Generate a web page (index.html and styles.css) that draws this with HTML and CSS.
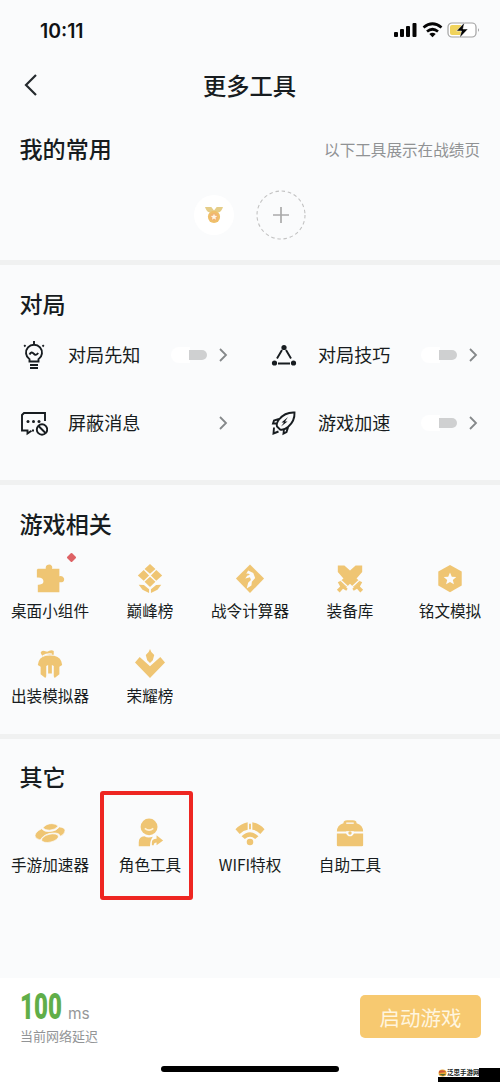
FILE: index.html
```html
<!DOCTYPE html>
<html lang="zh-CN">
<head>
<meta charset="utf-8">
<title>更多工具</title>
<link rel="stylesheet" href="styles.css">
</head>
<body>
<main class="screen">
  <header class="status">
    <span class="clock">10:11</span>
    <svg class="status-icons" width="86" height="18" viewBox="0 0 86 18">
      <g fill="#050505"><rect x="0" y="10" width="4" height="5" rx="1"/><rect x="6" y="7" width="4" height="8" rx="1"/><rect x="12" y="4" width="4" height="11" rx="1"/><rect x="18.500" y="1" width="4" height="14" rx="1"/></g>
      <path d="M29.500 5.500Q38.500-2 47.500 5.500M33 9.500Q38.500 5 44 9.500" fill="none" stroke="#050505" stroke-width="2.700"/>
      <path d="M35.300 12Q38.500 9.500 41.700 12L38.500 15.200Z" fill="#050505"/>
      <rect x="54" y="1" width="28" height="14" rx="4" fill="#fff" stroke="#a2a2a2" stroke-width="1.200"/>
      <path d="M58 3h9v10h-9q-2 0-2-2V5q0-2 2-2z" fill="#f0d35c"/>
      <path d="M70.500.5 62.500 9h5L65.500 16 74 7h-5z" fill="#050505" stroke="#fff" stroke-width=".5"/>
      <path d="M84 6q1.600 2 0 4z" fill="#777"/>
    </svg>
  </header>
  <nav class="nav">
    <svg class="back" width="14" height="22" viewBox="0 0 14 22"><path d="M12 1 2 11l10 10" fill="none" stroke="#252a2e" stroke-width="2.200"/></svg>
    <h1 class="title">更多工具</h1>
  </nav>

  <section class="favorites">
    <div class="section-head"><h2 class="heading">我的常用</h2><span class="hint">以下工具展示在战绩页</span></div>
    <div class="slots">
      <div class="slot medal">
        <svg width="20" height="18" viewBox="0 0 22 20"><path d="M1 1h7l3 4 3-4h7q-2 6-5 6H6Q3 7 1 1z" fill="#e5cd88"/><circle cx="11" cy="12" r="6.800" fill="#efc06a"/><circle cx="11" cy="12" r="4.300" fill="#f1b473"/><path d="m11 8.500 1 2.400 2.600.1-2 1.700.7 2.600-2.300-1.400-2.300 1.400.7-2.600-2-1.700 2.600-.1z" fill="#fff6e6"/></svg>
      </div>
      <svg width="50" height="50" viewBox="0 0 50 50"><circle cx="25" cy="25" r="24" fill="none" stroke="#c2c2c2" stroke-width="1.100" stroke-dasharray="3.500 2.780"/><path d="M17 25h16M25 17v16" stroke="#aaa" stroke-width="1.700"/></svg>
    </div>
  </section>

  <section class="match">
    <h2 class="heading">对局</h2>
    <div class="options">
      <div class="option">
        <svg class="line-icon" viewBox="0 0 28 28"><path d="M9.500 20.500v-2.200a8 8 0 1 1 9 0v2.200zM10 24h8M10 27h8M9.500 13.500q2-3.500 4.200-.8 2 2.600 4.500-.7M14 0v3M4.200 4.200l1.300 1.300M23.800 4.200l-1.300 1.300"/></svg>
        <span class="option-name">对局先知</span><i class="toggle"></i><svg class="arrow" viewBox="0 0 9 14"><path d="m1 1 6 6-6 6"/></svg>
      </div>
      <div class="option">
        <svg class="line-icon" viewBox="0 0 28 28"><path d="m12 9-5 8.500M16 9l5 8.500M8 22.500h12"/><g class="solid"><circle cx="14" cy="6.500" r="2.600"/><circle cx="4.500" cy="22" r="2.600"/><circle cx="23.500" cy="22" r="2.600"/></g></svg>
        <span class="option-name">对局技巧</span><i class="toggle"></i><svg class="arrow" viewBox="0 0 9 14"><path d="m1 1 6 6-6 6"/></svg>
      </div>
      <div class="option">
        <svg class="line-icon" viewBox="0 0 28 28"><path d="M25 12V4H4L2 6v15.500h5.500v3l4-2.800M14 21.500h-2"/><circle cx="22" cy="20.500" r="5.200"/><path d="m18.500 17 7 7"/><g class="solid"><circle cx="8" cy="12.500" r="1.500"/><circle cx="13.500" cy="12.500" r="1.500"/><circle cx="19" cy="12.500" r="1.500"/></g></svg>
        <span class="option-name">屏蔽消息</span><svg class="arrow" viewBox="0 0 9 14"><path d="m1 1 6 6-6 6"/></svg>
      </div>
      <div class="option">
        <svg class="line-icon" viewBox="0 0 28 28"><path d="M24.500 3.500Q15 3 9 10.500q-3 4-2 7l3 3q4 1 8-2.500 7-6 6.500-14.500zM9 10l-5 1.500-1 3 4 0M18 18.500l-1.500 4.500-3 1.500.5-4M4 18.500 3.500 24.500l5-2"/><path class="solid" d="m18 8-6.500 5.500h2.500L11 17.500l6.500-5h-2.500z"/></svg>
        <span class="option-name">游戏加速</span><i class="toggle"></i><svg class="arrow" viewBox="0 0 9 14"><path d="m1 1 6 6-6 6"/></svg>
      </div>
    </div>
  </section>

  <section class="games">
    <h2 class="heading">游戏相关</h2>
    <div class="tools">
      <div class="tool new"><svg class="gold" viewBox="0 0 32 32"><path d="M3 5h8.500Q11 2 13 1q3-1.500 5 1 .8 1.500 0 3H26v8q4-1 5 2.500.8 4.500-5 4V30H3v-8q6 .5 6-3.500 0-4.500-7-4V6z"/></svg><span>桌面小组件</span></div>
      <div class="tool"><svg class="gold" viewBox="0 0 32 32"><path d="m16 0 5.800 5.200L16 10.500l-5.800-5.300zM9.300 6.500l5.700 5.700-5.700 5.700L3 12.200zM22.700 6.500l6.300 5.700-6.300 5.700-5.700-5.700zM16 13.500l5.800 5.500L16 24.500 10.200 19zM4 22l5.500.5L15 27v4L8 27.500zM28 22l-5.500.5L17 27v4l7-3.500z"/></svg><span>巅峰榜</span></div>
      <div class="tool"><svg class="gold" viewBox="0 0 32 32"><path d="m16 .5 15 15L16 31 1 15.500z"/><path class="cut" d="m14 7 5.500 2.500L21.500 15l-3.500 4-.5 4-5 3 1.500-6 3-3-1-3-5 1.500 2-3 3-1-2-1.500-2 .5z"/></svg><span>战令计算器</span></div>
      <div class="tool"><svg class="gold" viewBox="0 0 32 32"><path d="M3 1.500h7l6 5.500 6-5.500h7v7l-6 7 4 3.500-7 6-4-4-4 4-7-6 4-3.500-6-7z"/><path d="m3 19.500 2-1 8.500 8-1.500 2-3.500-2L5 30.500l-3-3L5.500 24zM29 19.500l-2-1-8.500 8 1.500 2 3.500-2 3.500 4 3-3-3.500-3.500z"/><path class="seam" d="m6.500 17.500 8 7.500M25.500 17.500l-8 7.500"/></svg><span>装备库</span></div>
      <div class="tool"><svg class="gold" viewBox="0 0 32 32"><path d="m16 1 12.500 7v15L16 30 3.500 23V8z"/><path class="cut" d="m16 9 1.900 4.500 4.800.4-3.700 3.100 1.200 4.700L16 19.200l-4.200 2.500L13 17l-3.700-3.100 4.800-.4z"/></svg><span>铭文模拟</span></div>
      <div class="tool"><svg class="gold" viewBox="0 0 32 32"><path d="M6 4q1-3 4-2l3 1q4-3 7-1v4H12l-4 2zM4 13q2-6 12-6 10 0 12 6l1 4-3 2v8l-5 4-1-2V18l-2-1v9h-4v-9l-2 1v11l-1 2-5-4v-8l-3-2z"/><path class="seam" d="M8 7.500q5-3 10-2"/></svg><span>出装模拟器</span></div>
      <div class="tool"><svg class="gold" viewBox="0 0 32 32"><path d="M16 0q1 4 4.500 6.500L19 12l-3 3-3-3-1.500-5.500Q15 4 16 0z"/><path d="M5 8.500 16 18.500 27 8.500l5 6L16 31 0 14.500z"/></svg><span>荣耀榜</span></div>
    </div>
  </section>

  <section class="others">
    <h2 class="heading">其它</h2>
    <div class="tools">
      <div class="tool"><svg class="gold saucer" viewBox="0 0 32 32"><path d="M8.500 10.500Q12 6 18 6q5 0 6.500 3-3 3.500-9 4-5 0-7-2.500z"/><path d="M7 11.500q3 3.500 9 3 7-.7 10-5 6 .5 6 4 0 3.500-5 6-1-4-8-3.500-9 .5-13.500 7.500Q0 22 0 19q0-4 7-7.500z"/><ellipse cx="16" cy="21.500" rx="9.200" ry="4.200" transform="rotate(-14 16 21.500)"/></svg><span>手游加速器</span></div>
      <div class="tool marked"><svg class="gold" viewBox="0 0 32 32"><circle cx="15" cy="9.500" r="9"/><path class="smile" d="M10.500 11q4.500 4 9 0"/><path d="M4 30v-4q0-6 6-6.500 4 2.500 9 .5-3 4-3 10zM18 29v-3q0-4 5-4v-3.500l7 5.500-7 5v-3q-3 0-3 3z"/></svg><span>角色工具</span></div>
      <div class="tool"><svg class="gold" viewBox="0 0 32 32"><path d="M.5 12Q6 6 13.500 4.500v8Q9 13 5 17zM18.500 4.500Q26 6 31.500 12L27 17q-4-4-8.500-4.500z"/><path d="M7 19.500q9-8.500 18 0l-3.500 3q-5.500-5-11 0z"/><path d="M15 6h2v6h-2z"/><circle cx="16" cy="25.500" r="3.500"/></svg><span>WIFI特权</span></div>
      <div class="tool"><svg class="gold" viewBox="0 0 32 32"><path d="M2 14.500Q2 7.500 9 5.500q0-3 4-3h6q4 0 4 3 7 2 7 9zM2 16.500h28V29q0 1-1.500 1h-25Q2 30 2 29z"/><path class="cut" d="M12 14h8v2.500q-1 3-4 3t-4-3z"/><circle cx="16" cy="16" r="1.800"/><path class="seam" d="M12 5.500h8"/></svg><span>自助工具</span></div>
    </div>
  </section>

  <footer class="footer">
    <div class="latency"><div class="reading"><strong><b>100</b></strong><span>ms</span></div><p>当前网络延迟</p></div>
    <div class="launch">启动游戏</div>
    <div class="home-bar"></div>
    <div class="watermark"><div class="brand"><svg width="9" height="8" viewBox="0 0 9 8"><ellipse cx="4.500" cy="4" rx="4" ry="3.500" fill="#e9a735"/><path d="M1 2q4-2 7 1l-7 1z" fill="#ce5538"/><path d="M1 5h7L5 7z" fill="#536935"/></svg><span>泛思手游网</span></div></div>
  </footer>
</main>
</body>
</html>
```
FILE: styles.css
```css
*, *::before, *::after { box-sizing: border-box; }
body { margin: 0; font-family: "Noto Sans CJK SC", sans-serif; color: #171c20; background: #fafbfc; }
h1, h2, p { margin: 0; }
svg { display: block; flex: none; }
.screen { width: 500px; height: 1082px; display: flex; flex-direction: column; overflow: hidden; }
.status { height: 60px; padding: 2px 20px 0 40px; display: flex; justify-content: space-between; align-items: center; }
.clock { font: 600 19.400px/24px Inter, sans-serif; color: #101214; }
.nav { height: 50px; padding: 0 25px 0 24px; display: grid; grid-template-columns: 20px 1fr 20px; align-items: center; }
.title { text-align: center; font-size: 23.300px; line-height: 34px; font-weight: 500; padding-bottom: 1px; }
.heading { font-size: 23.100px; font-weight: 500; line-height: 34px; }
.favorites { height: 155px; border-bottom: 5px solid #f0f1f1; }
.section-head { display: flex; justify-content: space-between; align-items: center; padding: 21px 20px 0; }
.section-head .heading { margin-left: -.5px; }
.hint { color: #909294; font-size: 15.600px; line-height: 24px; padding-top: 2px; }
.slots { display: flex; justify-content: center; align-items: center; gap: 22px; padding: 25px 0 0; }
.slot { width: 40px; height: 40px; border-radius: 50%; background: #fff; display: flex; align-items: center; justify-content: center; }
.match { height: 220px; border-bottom: 5px solid #f0f1f1; padding-top: 21px; }
.match .heading, .games .heading, .others .heading { padding-left: 19.500px; }
.options { display: grid; grid-template-columns: 250px 250px; grid-auto-rows: 68px; padding-top: 1px; }
.option { display: flex; align-items: center; padding: 0 22px 0 20px; }
.line-icon { width: 28px; height: 28px; margin-right: 20px; fill: none; stroke: #171c20; stroke-width: 1.900; }
.solid { fill: #171c20; stroke: none; }
.option-name { font-size: 18.100px; line-height: 28px; padding-bottom: 2px; }
.toggle { width: 36px; height: 16px; margin-left: auto; margin-right: 12px; border-radius: 8px; background: linear-gradient(90deg, #fff 19px, #fafbfc 19px); display: flex; align-items: center; justify-content: flex-end; }
.toggle::after { content: ""; width: 18px; height: 10px; background: #cfd0d1; border-radius: 0 5px 5px 0; }
.arrow { width: 9px; height: 14px; fill: none; stroke: #85888a; stroke-width: 1.800; }
.option-name + .arrow { margin-left: auto; }
.games { height: 254px; border-bottom: 5px solid #f0f1f1; padding-top: 21px; }
.tools { display: grid; grid-template-columns: repeat(5, 100px); grid-auto-rows: 84.500px; padding-top: 24px; }
.tool { display: flex; flex-direction: column; align-items: center; gap: 4px; font-size: 15.600px; line-height: 24px; white-space: nowrap; position: relative; }
.gold { width: 30px; height: 30px; fill: #efc573; }
.cut { fill: #fafbfc; }
.seam { fill: none; stroke: #fafbfc; stroke-width: 1.400; }
.smile { fill: none; stroke: #fff2d7; stroke-width: 1.800; }
.saucer { stroke: #fafbfc; stroke-width: .7; }
.new::after { content: ""; position: absolute; width: 7px; height: 7px; left: 68px; top: -10px; background: #de6265; transform: rotate(45deg); border-radius: 1px; }
.others { height: 239px; padding-top: 20px; }
.others .tools { padding-top: 25px; }
.marked::after { content: ""; position: absolute; left: 0; top: -27px; width: 93px; height: 109px; border: 4px solid #ee2622; border-radius: 3px; }
.footer { height: 104px; background: #fff; position: relative; display: flex; justify-content: space-between; align-items: flex-start; padding: 17px 19px 0 20px; }
.reading { display: flex; align-items: baseline; height: 31px; line-height: 31px; margin-top: -4px; }
.reading strong { width: 43px; flex: none; }
.reading b { display: inline-block; font: 900 36.500px/31px Roboto, sans-serif; color: #60ae49; transform: scaleX(.66); transform-origin: left; }
.reading span { font: 15.500px/20px Inter, sans-serif; color: #969899; margin-left: 5px; }
.latency p { font-size: 13px; line-height: 18px; color: #929496; margin-top: 5px; }
.launch { width: 121px; height: 43px; background: #f7c970; border-radius: 5px; color: #fff5df; font-size: 20.500px; line-height: 44px; text-align: center; }
.home-bar { position: absolute; left: 161px; top: 88px; width: 178px; height: 6px; background: #000; border-radius: 3px; }
.watermark { position: absolute; left: 438px; top: 90px; width: 62px; height: 14px; background: #000; }
.brand { width: 41px; height: 9px; background: #fff; display: flex; align-items: center; overflow: hidden; font-size: 6.500px; font-weight: 700; line-height: 9px; white-space: nowrap; }
```
